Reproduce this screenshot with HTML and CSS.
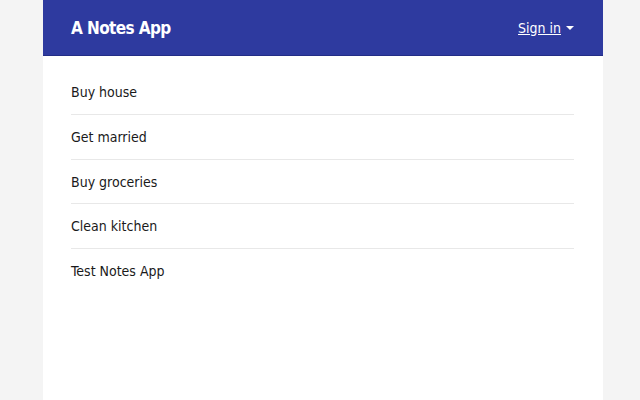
FILE: index.html
```html
<!DOCTYPE html>
<html>
<head>
<meta charset="utf-8">
<link rel="stylesheet" href="styles.css">
</head>
<body>
<div class="page">
  <header class="topbar">
    <span class="brand">A Notes App</span>
    <a class="signin" href="#">Sign in <span class="caret"></span></a>
  </header>
  <ul class="notes">
    <li class="note">Buy house</li>
    <li class="note">Get married</li>
    <li class="note">Buy groceries</li>
    <li class="note">Clean kitchen</li>
    <li class="note">Test Notes App</li>
  </ul>
</div>
</body>
</html>
```
FILE: styles.css
```css
html, body {
  margin: 0;
  padding: 0;
  height: 100%;
  background: #f4f4f4;
  font-family: "DejaVu Sans Condensed", "DejaVu Sans", sans-serif;
  color: #1a1a1a;
}
.page {
  width: 560px;
  margin-left: 43px;
  min-height: 100%;
  background: #ffffff;
}
.topbar {
  height: 56px;
  box-sizing: border-box;
  background: #2e3a9f;
  border-bottom: 1px solid #232d86;
  display: flex;
  align-items: center;
  justify-content: space-between;
  padding: 0 29px 0 28px;
}
.brand {
  color: #ffffff;
  font-weight: bold;
  font-size: 17px;
  letter-spacing: -0.6px;
}
.signin {
  color: #ffffff;
  font-size: 14px;
  text-decoration: underline;
  display: flex;
  align-items: center;
  gap: 5px;
}
.caret {
  display: inline-block;
  width: 0;
  height: 0;
  margin-top: 1px;
  border-left: 4px solid transparent;
  border-right: 4px solid transparent;
  border-top: 4px solid #ffffff;
}
.notes {
  list-style: none;
  margin: 0 29px 0 28px;
  padding: 14px 0 0 0;
}
.note {
  font-size: 14px;
  line-height: 20px;
  padding: 12px 0;
  border-bottom: 1px solid #e8e8e8;
}
.note:nth-child(3) {
  padding-bottom: 11px;
}
.note:last-child {
  border-bottom: none;
}
```
